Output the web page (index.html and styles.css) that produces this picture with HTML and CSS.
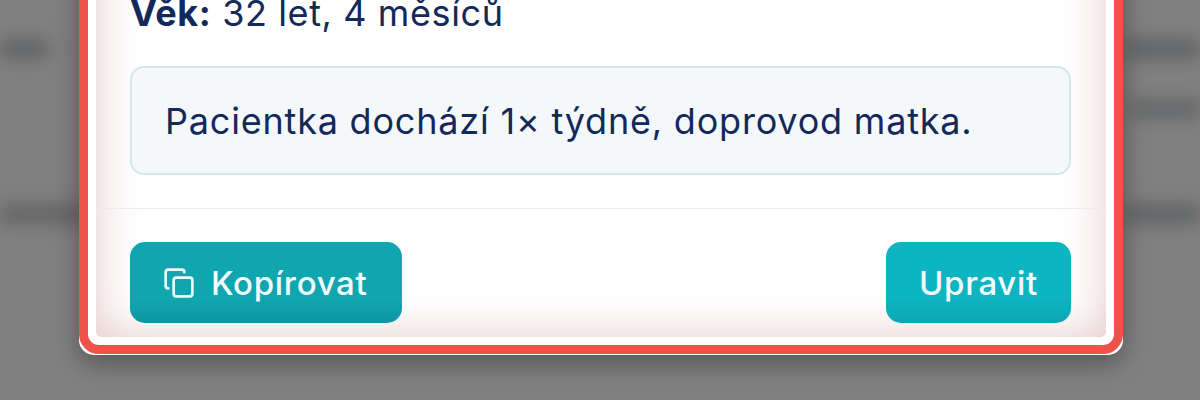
FILE: index.html
```html
<!DOCTYPE html>
<html lang="cs">
<head>
  <meta charset="UTF-8" />
  <meta name="viewport" content="width=device-width, initial-scale=1.0" />
  <title>Detail pacienta</title>
  <link rel="stylesheet" href="styles.css">
</head>
<body>
  <div class="backdrop">
    <div class="blur-row row-one"><span class="blob blob-left"></span><span class="blob blob-right"></span></div>
    <div class="blur-row row-two"><span></span><span class="blob blob-right-short"></span></div>
    <div class="blur-row row-three"><span class="blob blob-left-long"></span><span class="blob blob-right"></span></div>
  </div>

  <div class="overlay">
    <div class="modal">
      <div class="ring">
        <div class="panel">
          <div class="modal-body">
            <p class="age"><strong>Věk:</strong> 32 let, 4 měsíců</p>
            <div class="note">Pacientka dochází 1× týdně, doprovod matka.</div>
          </div>
          <div class="modal-footer">
            <button class="btn btn-copy">
              <svg class="icon" viewBox="0 0 24 24" fill="none" stroke="currentColor" stroke-width="2" stroke-linecap="round" stroke-linejoin="round">
                <rect x="8" y="8" width="14" height="14" rx="2" ry="2"></rect>
                <path d="M4 16c-1.1 0-2-.9-2-2V4c0-1.1.9-2 2-2h10c1.1 0 2 .9 2 2"></path>
              </svg>
              Kopírovat
            </button>
            <button class="btn btn-edit">Upravit</button>
          </div>
        </div>
      </div>
    </div>
  </div>
</body>
</html>
```

FILE: styles.css
```css
* {
  box-sizing: border-box;
}
html, body {
  height: 100%;
}
body {
  margin: 0;
  overflow: hidden;
  background-color: #808080;
  font-family: "Inter", "Noto Sans", sans-serif;
  color: #12295a;
}

/* blurred page behind the dialog */
.backdrop {
  position: absolute;
  inset: 0;
  padding-top: 40px;
  filter: blur(9px);
}
.blur-row {
  display: flex;
  justify-content: space-between;
  height: 18px;
}
.row-two {
  margin-top: 42px;
}
.row-three {
  margin-top: 87px;
}
.blob {
  display: block;
  height: 100%;
  background-color: #5e6062;
}
.blob-left {
  width: 48px;
}
.blob-right {
  width: 76px;
}
.blob-right-short {
  width: 70px;
  background-color: #626466;
}
.blob-left-long {
  width: 90px;
  background-color: #626262;
}

.overlay {
  position: relative;
  height: 400px;
  display: flex;
  flex-direction: column;
  justify-content: flex-end;
  padding: 0 77px 45px 79px;
}
.modal {
  background-color: #fff;
  border-radius: 15px;
  padding-bottom: 1px;
  box-shadow: 0 8px 26px rgba(0, 0, 0, 0.34);
}
.ring {
  border: 9px solid #ef5249;
  border-radius: 20px;
  padding: 0 8px 8px;
  background-color: #fff;
}
.panel {
  border-radius: 0 0 5px 5px;
  background-color: #fff;
  box-shadow: inset 0 0 44px rgba(165, 70, 70, 0.3);
}
.modal-body {
  padding: 60px 35px 33px 34px;
  border-bottom: 1px solid #ececee;
}
.age {
  margin: 0 0 30px;
  font-size: 36px;
  line-height: 46px;
  letter-spacing: 0.6px;
}
.age strong {
  font-weight: 700;
}
.note {
  height: 109px;
  display: flex;
  align-items: center;
  padding: 0 33px;
  background-color: #f5f8fb;
  border: 2px solid #d3e6e8;
  border-radius: 14px;
  font-size: 36px;
  letter-spacing: 0.8px;
}
.modal-footer {
  display: flex;
  justify-content: space-between;
  padding: 33px 35px 14px 34px;
}
.btn {
  display: flex;
  align-items: center;
  gap: 16px;
  height: 81px;
  border: 0;
  border-radius: 15px;
  color: #f2fdfd;
  font-family: inherit;
  font-size: 33px;
  font-weight: 500;
  letter-spacing: 0.7px;
}
.btn-copy {
  padding: 0 34px 0 33px;
  background: linear-gradient(#0fa6b0 70%, #0e96a3);
}
.btn-edit {
  padding: 0 33px;
  background: linear-gradient(#0cb5c1 70%, #0ca6b3);
}
.icon {
  width: 32px;
  height: 32px;
}
```
